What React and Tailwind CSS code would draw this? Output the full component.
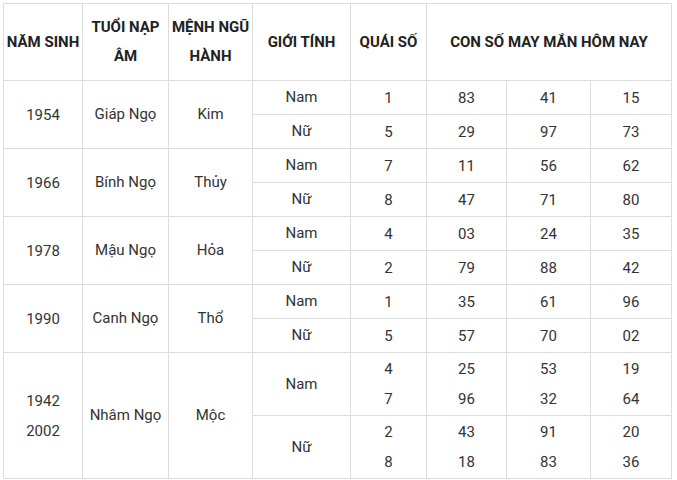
const ROWS = [
  { year: ['1954'], tuoi: 'Giáp Ngọ', menh: 'Kim', nam: { q: ['1'], n: [['83', '41', '15']] }, nu: { q: ['5'], n: [['29', '97', '73']] } },
  { year: ['1966'], tuoi: 'Bính Ngọ', menh: 'Thủy', nam: { q: ['7'], n: [['11', '56', '62']] }, nu: { q: ['8'], n: [['47', '71', '80']] } },
  { year: ['1978'], tuoi: 'Mậu Ngọ', menh: 'Hỏa', nam: { q: ['4'], n: [['03', '24', '35']] }, nu: { q: ['2'], n: [['79', '88', '42']] } },
  { year: ['1990'], tuoi: 'Canh Ngọ', menh: 'Thổ', nam: { q: ['1'], n: [['35', '61', '96']] }, nu: { q: ['5'], n: [['57', '70', '02']] } },
  {
    year: ['1942', '2002'], tuoi: 'Nhâm Ngọ', menh: 'Mộc',
    nam: { q: ['4', '7'], n: [['25', '53', '19'], ['96', '32', '64']] },
    nu: { q: ['2', '8'], n: [['43', '91', '20'], ['18', '83', '36']] },
  },
];

const td = 'border border-[#dcdcdc] text-center align-middle p-0';

// several values stacked in one cell (the last group)
const Lines = ({ items }) => (
  <div className="flex flex-col items-center">
    {items.map((v, i) => (
      <span key={i} className="leading-[30px]">{v}</span>
    ))}
  </div>
);

const SubRow = ({ group, label, sex, first }) => {
  const tall = group.year.length > 1;
  const h = tall ? 'h-[63px]' : 'h-[34px]';
  return (
    <tr className={h}>
      {first && (
        <>
          <td rowSpan={2} className={td}><Lines items={group.year} /></td>
          <td rowSpan={2} className={td}>{group.tuoi}</td>
          <td rowSpan={2} className={td}>{group.menh}</td>
        </>
      )}
      <td className={td}>{label}</td>
      <td className={td}><Lines items={sex.q} /></td>
      {[0, 1, 2].map((c) => (
        <td key={c} className={td}><Lines items={sex.n.map((r) => r[c])} /></td>
      ))}
    </tr>
  );
};

export default function App() {
  return (
    <div className="w-[677px] h-[480px] bg-white pt-[3px] pl-[3px]" style={{ fontFamily: 'Roboto, "Liberation Sans", sans-serif' }}>
      <table className="table-fixed border-collapse w-[668px] text-[15px] text-[#333]">
        <colgroup>
          <col className="w-[79px]" />
          <col className="w-[86px]" />
          <col className="w-[84px]" />
          <col className="w-[98px]" />
          <col className="w-[76px]" />
          <col className="w-[80px]" />
          <col className="w-[84px]" />
          <col className="w-[81px]" />
        </colgroup>
        <thead>
          <tr className="h-[77px] font-bold text-[#222] leading-[29px]">
            <th className={td}>NĂM SINH</th>
            <th className={td}>TUỔI NẠP ÂM</th>
            <th className={td}>MỆNH NGŨ HÀNH</th>
            <th className={td}>GIỚI TÍNH</th>
            <th className={td}>QUÁI SỐ</th>
            <th colSpan={3} className={td}>CON SỐ MAY MẮN HÔM NAY</th>
          </tr>
        </thead>
        <tbody>
          {ROWS.map((g) => (
            <>
              <SubRow key={g.tuoi + 'a'} group={g} label="Nam" sex={g.nam} first />
              <SubRow key={g.tuoi + 'b'} group={g} label="Nữ" sex={g.nu} />
            </>
          ))}
        </tbody>
      </table>
    </div>
  );
}
